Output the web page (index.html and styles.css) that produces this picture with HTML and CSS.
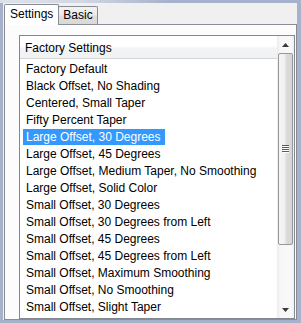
FILE: index.html
```html
<!DOCTYPE html>
<html>
<head>
<meta charset="utf-8">
<link rel="stylesheet" href="styles.css">
</head>
<body>
<div class="window">
  <div class="client">
    <div class="tabs">
      <div class="tab active">Settings</div>
      <div class="tab">Basic</div>
    </div>
    <div class="panel">
      <div class="listview">
        <div class="lv-main">
          <div class="lv-header">Factory Settings</div>
          <ul class="lv-items">
            <li><span>Factory Default</span></li>
            <li><span>Black Offset, No Shading</span></li>
            <li><span>Centered, Small Taper</span></li>
            <li><span>Fifty Percent Taper</span></li>
            <li class="selected"><span>Large Offset, 30 Degrees</span></li>
            <li><span>Large Offset, 45 Degrees</span></li>
            <li><span>Large Offset, Medium Taper, No Smoothing</span></li>
            <li><span>Large Offset, Solid Color</span></li>
            <li><span>Small Offset, 30 Degrees</span></li>
            <li><span>Small Offset, 30 Degrees from Left</span></li>
            <li><span>Small Offset, 45 Degrees</span></li>
            <li><span>Small Offset, 45 Degrees from Left</span></li>
            <li><span>Small Offset, Maximum Smoothing</span></li>
            <li><span>Small Offset, No Smoothing</span></li>
            <li><span>Small Offset, Slight Taper</span></li>
          </ul>
        </div>
        <div class="scrollbar">
          <div class="sb-btn">
            <svg width="7" height="4" viewBox="0 0 7 4"><path d="M3.5 0 L7 4 L0 4 Z" fill="#3a3a3a"/></svg>
          </div>
          <div class="sb-track">
            <div class="sb-thumb">
              <svg width="7" height="8" viewBox="0 0 7 8">
                <g fill="#5a5a5a"><rect x="0" y="0" width="7" height="1"/><rect x="0" y="2" width="7" height="1"/><rect x="0" y="4" width="7" height="1"/><rect x="0" y="6" width="7" height="1"/></g>
                <g fill="#ffffff"><rect x="1" y="1" width="6" height="1"/><rect x="1" y="3" width="6" height="1"/><rect x="1" y="5" width="6" height="1"/><rect x="1" y="7" width="6" height="1"/></g>
              </svg>
            </div>
          </div>
          <div class="sb-btn">
            <svg width="7" height="4" viewBox="0 0 7 4"><path d="M0 0 L7 0 L3.5 4 Z" fill="#3a3a3a"/></svg>
          </div>
        </div>
      </div>
    </div>
  </div>
</div>
</body>
</html>
```
FILE: styles.css
```css
html, body {
  margin: 0;
  padding: 0;
}
body {
  background: #a6b1cb;
  font-family: "Liberation Sans", Arial, sans-serif;
  font-size: 12px;
  color: #000;
}
.window {
  width: 301px;
  height: 323px;
  box-sizing: border-box;
  padding: 3px 4px 3px 3px;
  background:
    linear-gradient(90deg, #dde1ea 0, #d2d8e4 80px, #a6b1cb 170px) top / 100% 3px no-repeat,
    #a6b1cb;
}
.client {
  height: 100%;
  background: #f0f0f0;
  display: flex;
  flex-direction: column;
}
.tabs {
  height: 21px;
  display: flex;
  align-items: flex-end;
  padding-left: 1px;
  position: relative;
  z-index: 1;
}
.tab {
  box-sizing: border-box;
  height: 18px;
  border: 1px solid #898c95;
  border-bottom: none;
  border-radius: 2px 2px 0 0;
  background: linear-gradient(#f3f3f3, #ebebeb 45%, #dedede 55%, #d8d8d8);
  padding: 0 4px;
  line-height: 17px;
  margin-left: -1px;
}
.tab.active {
  height: 21px;
  margin-left: 0;
  margin-bottom: -1px;
  background: #ffffff;
  line-height: 18px;
  padding: 0 5px;
  position: relative;
  z-index: 2;
}
.panel {
  flex: 1;
  margin-left: 1px;
  border: 1px solid #898c95;
  background: #fcfcfc;
  display: flex;
  padding: 10px 1px 0 14px;
}
.listview {
  flex: 1;
  border: 1px solid #828790;
  background: #fff;
  display: flex;
}
.lv-main {
  flex: 1;
  display: flex;
  flex-direction: column;
}
.lv-header {
  height: 23px;
  box-sizing: border-box;
  border-bottom: 1px solid #d5d5d5;
  background: linear-gradient(#ffffff, #ffffff 45%, #f3f4f6 55%, #f0f1f3);
  padding: 2px 0 0 5px;
  line-height: 20px;
}
.lv-items {
  list-style: none;
  margin: 0;
  padding: 2px 0 0 3px;
}
.lv-items li {
  height: 17px;
  line-height: 17px;
  white-space: nowrap;
}
.lv-items li span {
  display: inline-block;
  padding: 0 4px 0 3px;
}
.lv-items li.selected span {
  background: #3399ff;
  color: #fff;
  line-height: 16px;
}
.scrollbar {
  width: 17px;
  display: flex;
  flex-direction: column;
  background: linear-gradient(90deg, #ececec, #f7f7f7 20%, #f9f9f9 80%, #f0f0f0);
}
.sb-btn {
  height: 17px;
  display: flex;
  align-items: center;
  justify-content: center;
}
.sb-btn svg {
  display: block;
}
.sb-track {
  flex: 1;
  padding: 0 1px;
  display: flex;
  flex-direction: column;
}
.sb-thumb {
  height: 192px;
  box-sizing: border-box;
  border: 1px solid #979797;
  border-radius: 2px;
  background: linear-gradient(90deg, #f6f6f6, #f0f0f0 45%, #dcdcdc 55%, #d6d6d6);
  display: flex;
  align-items: center;
  justify-content: center;
}
```
